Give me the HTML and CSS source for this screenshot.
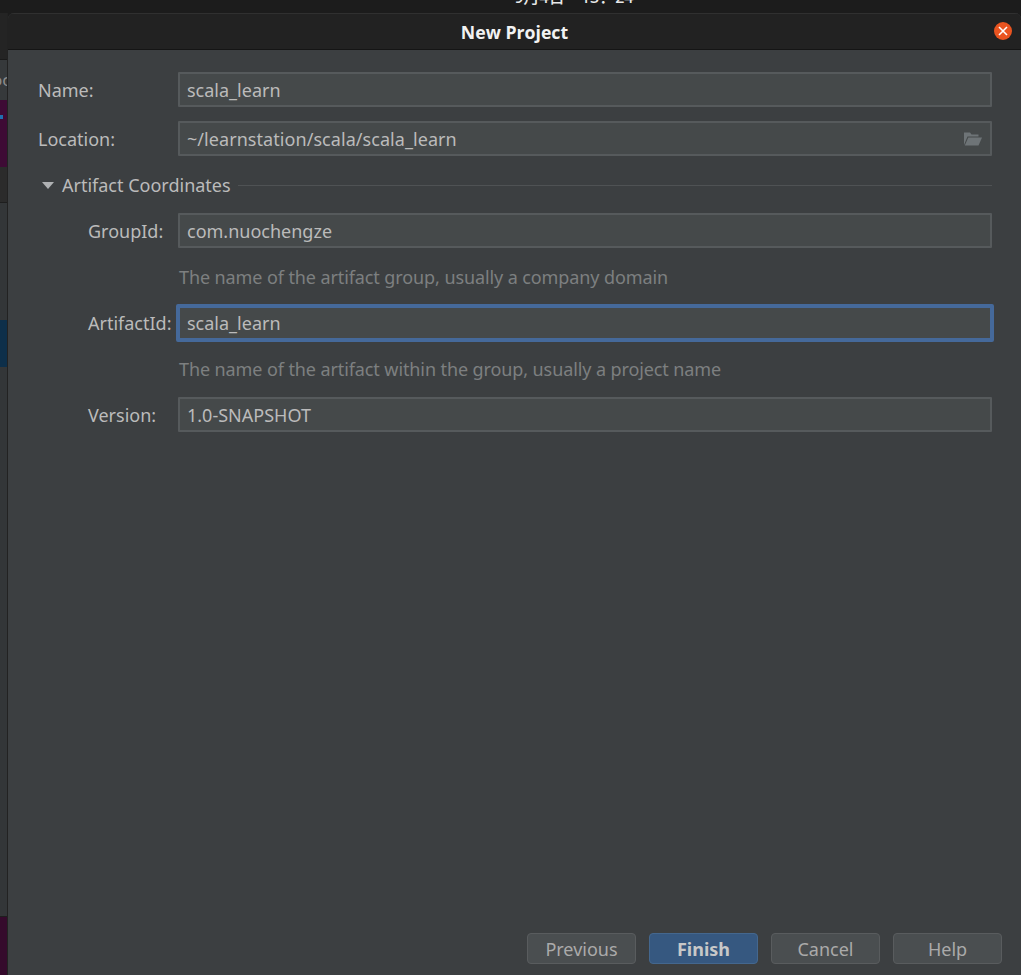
FILE: index.html
```html
<!DOCTYPE html>
<html lang="en">
<head>
    <meta charset="UTF-8">
    <meta name="viewport" content="width=device-width, initial-scale=1.0">
    <title>New Project</title>
    <link rel="stylesheet" href="styles.css">
</head>
<body>
    <div class="topbar"><span class="clock">9月4日 13：24</span></div>

    <div class="desktop">
        <!-- Bits of the IDE window showing behind the dialog -->
        <div class="behind">
            <div class="behind-top"></div>
            <div class="behind-tab"><span class="behind-text">oc</span></div>
            <div class="behind-purple"><span class="behind-dot"></span></div>
            <div class="behind-dark"></div>
            <div class="behind-gray"></div>
            <div class="behind-blue"></div>
            <div class="behind-panel"></div>
            <div class="behind-bottom"></div>
        </div>

        <div class="dialog">
            <div class="titlebar">
                <span class="title">New Project</span>
                <span class="close">
                    <svg width="10" height="10" viewBox="0 0 10 10"><path d="M1 1L9 9M9 1L1 9" stroke="#fff" stroke-width="1.6"/></svg>
                </span>
            </div>

            <div class="content">
                <div class="form">
                    <div class="row">
                        <label class="label">Name:</label>
                        <div class="field">scala_learn</div>
                    </div>
                    <div class="row">
                        <label class="label">Location:</label>
                        <div class="field field-browse">
                            <span>~/learnstation/scala/scala_learn</span>
                            <svg class="folder" width="20" height="16" viewBox="0 0 20 16">
                                <path d="M1 14V1.500h6l1.500 2h7v2H4.500L1 14z" fill="#6e7477"/>
                                <path d="M5.300 6.500H19L15.500 14.500H1.800z" fill="#6e7477"/>
                            </svg>
                        </div>
                    </div>

                    <div class="section-head">
                        <span class="arrow"></span>
                        <span class="section-title">Artifact Coordinates</span>
                        <span class="section-line"></span>
                    </div>

                    <div class="row sub">
                        <label class="label">GroupId:</label>
                        <div class="field">com.nuochengze</div>
                    </div>
                    <div class="hint">The name of the artifact group, usually a company domain</div>
                    <div class="row sub">
                        <label class="label">ArtifactId:</label>
                        <div class="field focused">scala_learn</div>
                    </div>
                    <div class="hint">The name of the artifact within the group, usually a project name</div>
                    <div class="row sub">
                        <label class="label">Version:</label>
                        <div class="field">1.0-SNAPSHOT</div>
                    </div>
                </div>

                <div class="buttons">
                    <button class="btn">Previous</button>
                    <button class="btn btn-primary">Finish</button>
                    <button class="btn">Cancel</button>
                    <button class="btn">Help</button>
                </div>
            </div>
        </div>
    </div>
</body>
</html>
```
FILE: styles.css
```css
* {
    margin: 0;
    padding: 0;
    box-sizing: border-box;
    font-family: "Noto Sans", "Noto Sans CJK SC", sans-serif;
}

html, body {
    width: 1021px;
    height: 975px;
    overflow: hidden;
}

body {
    background: #1c1c1c;
    color: #bbbbbb;
    font-size: 18px;
    display: flex;
    flex-direction: column;
}

.topbar {
    height: 13px;
    background: #1c1c1c;
    overflow: hidden;
    display: flex;
    justify-content: center;
    padding-left: 127px;
}

.clock {
    color: #e8e8e8;
    font-size: 16px;
    line-height: 16px;
    margin-top: -11px;
    font-weight: 500;
    word-spacing: 12px;
}

.desktop {
    flex: 1;
    display: flex;
    min-height: 0;
}

/* Left strip of the window behind */
.behind {
    width: 8px;
    display: flex;
    flex-direction: column;
    flex-shrink: 0;
    overflow: hidden;
    border-right: 1px solid #222222;
}

.behind-top {
    height: 47px;
    background: #242424;
    border-bottom: 1px solid #1a1a1a;
}

.behind-tab {
    height: 40px;
    background: #36393b;
    overflow: hidden;
}

.behind-text {
    display: block;
    margin-left: -8px;
    color: #8c8c8c;
    font-size: 17px;
    line-height: 40px;
}

.behind-purple {
    height: 67px;
    background: #3e0b35;
    position: relative;
}

.behind-dot {
    position: absolute;
    left: 0;
    top: 15px;
    width: 3px;
    height: 4px;
    background: #1f6fb0;
}

.behind-dark {
    height: 36px;
    background: #2b2b2b;
    border-bottom: 1px solid #1e1e1e;
}

.behind-gray {
    height: 117px;
    background: #333638;
}

.behind-blue {
    height: 47px;
    background: #0d2f4a;
}

.behind-panel {
    flex: 1;
    background: #333638;
    border-bottom: 1px solid #1e1e1e;
}

.behind-bottom {
    height: 58px;
    background: #350a2c;
}

.dialog {
    flex: 1;
    display: flex;
    flex-direction: column;
    min-width: 0;
    background: #3c3f41;
    border-top-left-radius: 6px;
    border-top-right-radius: 6px;
    overflow: hidden;
}

.titlebar {
    height: 37px;
    flex-shrink: 0;
    background: #222222;
    border-top: 1px solid #303030;
    border-bottom: 1px solid #151515;
    display: flex;
    align-items: center;
    justify-content: center;
    position: relative;
}

.title {
    color: #f2f2f2;
    font-size: 17.7px;
    font-weight: 700;
    font-family: "Open Sans", "Noto Sans", sans-serif;
}

.close {
    position: absolute;
    right: 9px;
    top: 8px;
    width: 18px;
    height: 18px;
    border-radius: 50%;
    background: #e95420;
    display: flex;
    align-items: center;
    justify-content: center;
}

.content {
    flex: 1;
    display: flex;
    flex-direction: column;
    justify-content: space-between;
    padding: 22px 19px 11px 30px;
    min-height: 0;
}

.form {
    display: flex;
    flex-direction: column;
    padding-right: 10px;
}

.row {
    display: flex;
    align-items: center;
    height: 35px;
    margin-bottom: 14px;
}

.label {
    width: 140px;
    flex-shrink: 0;
    font-size: 18px;
}

.sub {
    padding-left: 50px;
    margin-bottom: 0;
}

.sub .label {
    width: 90px;
}

.field {
    flex: 1;
    height: 35px;
    background: #45494a;
    border: 2px solid #565a5c;
    border-radius: 1px;
    padding: 0 7px;
    line-height: 33px;
    font-size: 18px;
    color: #bbbbbb;
}

.field-browse {
    display: flex;
    justify-content: space-between;
    align-items: flex-start;
    padding-right: 7px;
    letter-spacing: 0.06px;
}

.folder {
    flex-shrink: 0;
    align-self: center;
}

.focused {
    border: 4px solid #45699a;
    height: 38px;
    line-height: 30px;
    padding: 0 7px;
    margin: 0 -2px;
    border-radius: 2px;
}

.section-head {
    display: flex;
    align-items: center;
    height: 24px;
    margin-top: 3px;
    margin-bottom: 16px;
}

.arrow {
    width: 0;
    height: 0;
    margin-left: 4px;
    margin-right: 8px;
    border-left: 6px solid transparent;
    border-right: 6px solid transparent;
    border-top: 7px solid #afb1b3;
}

.section-title {
    font-size: 18px;
    margin-right: 7px;
}

.section-line {
    flex: 1;
    height: 1px;
    background: #4f5254;
}

.hint {
    height: 57px;
    padding-left: 141px;
    line-height: 59px;
    font-size: 18px;
    letter-spacing: -0.1px;
    color: #7d7f80;
}

.buttons {
    display: flex;
    justify-content: flex-end;
    gap: 13px;
}

.btn {
    width: 109px;
    height: 31px;
    padding-top: 2px;
    background: #4a4e50;
    border: 1px solid #595c5e;
    border-radius: 4px;
    color: #aaaaaa;
    font-size: 18px;
    line-height: 27px;
}

.btn-primary {
    background: #365880;
    border-color: #44678e;
    color: #c8c8c8;
    font-weight: 700;
}
```
